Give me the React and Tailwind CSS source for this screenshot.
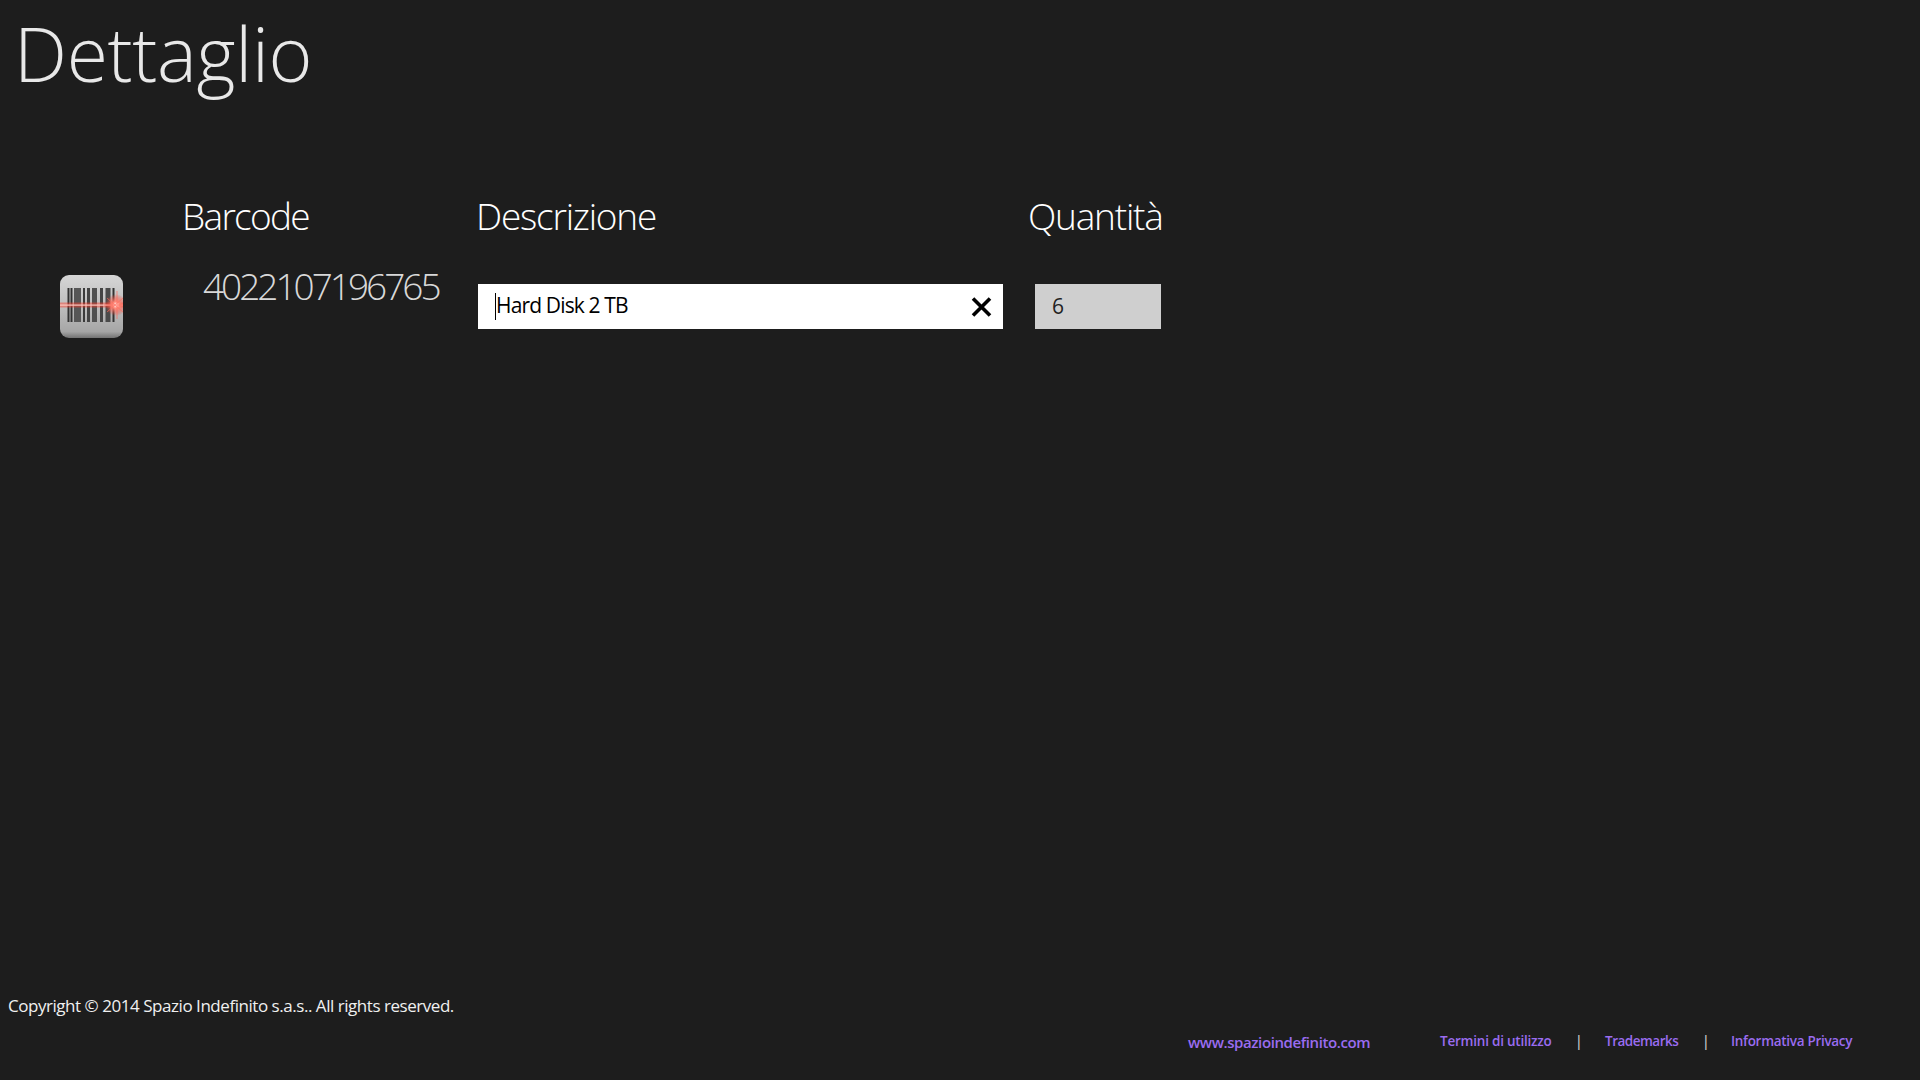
import React from 'react';

function BarcodeIcon() {
  const bars = [
    [7.5, 2, '#333'], [10.5, 2, '#333'], [14, 7, '#565656'], [23, 2, '#3a3a3a'], [27, 3, '#444'],
    [32, 5, '#505050'], [40, 3, '#444'], [45.5, 5, '#4a4a4a'], [52.5, 2, '#333'],
  ];
  return (
    <svg width="63" height="63" viewBox="0 0 63 63" className="shrink-0">
      <defs>
        <linearGradient id="tile" x1="0" y1="0" x2="0" y2="1">
          <stop offset="0" stopColor="#d6d6d6" />
          <stop offset="0.6" stopColor="#b8b8b8" />
          <stop offset="0.9" stopColor="#a6a6a6" />
          <stop offset="1" stopColor="#737373" />
        </linearGradient>
        <radialGradient id="flare">
          <stop offset="0" stopColor="#fff" />
          <stop offset="0.3" stopColor="#ff8a7a" />
          <stop offset="1" stopColor="#ff3b2b" stopOpacity="0" />
        </radialGradient>
      </defs>
      <rect width="63" height="63" rx="9" fill="url(#tile)" />
      {bars.map(([x, w, c]) => (
        <rect key={x} x={x} y="13" width={w} height="34" fill={c} />
      ))}
      <rect x="0" y="27.5" width="63" height="5" fill="#ff3b2b" opacity="0.45" />
      <rect x="0" y="29.5" width="63" height="1.2" fill="#ffc8bf" />
      <circle cx="56" cy="30" r="11" fill="url(#flare)" />
      <path d="M57 16v28M47 23l16 14M47 37l16-14M44 30h19" stroke="#ff6a5a" strokeWidth="0.8" opacity="0.8" />
    </svg>
  );
}

function ClearIcon() {
  return (
    <svg width="21" height="20" viewBox="0 0 21 20" className="shrink-0">
      <path d="M2 1.5 19 18.5M19 1.5 2 18.5" stroke="#000" strokeWidth="3.6" fill="none" />
    </svg>
  );
}

export default function App() {
  return (
    <div className="flex h-screen flex-col overflow-hidden bg-[#1d1d1d] font-['Open_Sans',sans-serif] text-white">
      <h1 className="pt-[6px] pl-[14px] text-[75px] leading-[94px] font-light tracking-[-0.3px] text-[#e8e8e8]">
        Dettaglio
      </h1>

      <div className="mt-[91px] flex pl-[60px]">
        <div className="mt-[84px] w-[123px] shrink-0 self-start">
          <BarcodeIcon />
        </div>
        <div className="w-[295px] shrink-0">
          <h2 className="-ml-[1px] text-[37px] leading-[50px] font-light tracking-[-1.7px]">Barcode</h2>
          <div className="mt-[20px] pl-[20px] text-[37px] leading-[50px] font-light tracking-[-3px] text-[#d8d8d8]">
            4022107196765
          </div>
        </div>
        <div className="w-[557px] shrink-0">
          <h2 className="-ml-[2px] text-[37px] leading-[50px] font-light tracking-[-1.2px]">Descrizione</h2>
          <div className="mt-[43px] flex h-[45px] w-[525px] items-center justify-between bg-white pr-[11px] pl-[17px] text-[21px] tracking-[-0.85px] text-black">
            <div className="flex items-center">
              <span className="h-[27px] w-px bg-black" />
              <span className="-mt-[1px]">Hard Disk 2 TB</span>
            </div>
            <ClearIcon />
          </div>
        </div>
        <div className="w-[130px] shrink-0">
          <h2 className="-ml-[7px] text-[37px] leading-[50px] font-light tracking-[-1.2px]">Quantità</h2>
          <div className="mt-[43px] flex h-[45px] w-[126px] items-center bg-[#cfcfcf] pl-[17px] text-[21px] text-[#222]">
            6
          </div>
        </div>
      </div>

      <div className="mt-auto pl-[8px] text-[17px] leading-[24px] tracking-[-0.46px] text-[#f0f0f0]">
        Copyright © 2014 Spazio Indefinito s.a.s.. All rights reserved.
      </div>
      <div className="mt-[14px] mb-[28px] flex items-center pl-[1188px] font-semibold text-[#9a6cf0]">
        <a className="w-[252px] text-[15px] leading-[20px] tracking-[-0.4px]">www.spazioindefinito.com</a>
        <a className="-mt-[3px] w-[135px] text-[13.5px] leading-[20px] tracking-[-0.22px]">Termini di utilizzo</a>
        <span className="-mt-[3px] w-[30px] text-[14px] leading-[20px] font-normal text-[#e0e0e0]">|</span>
        <a className="-mt-[3px] w-[97px] text-[13.5px] leading-[20px] tracking-[-0.5px]">Trademarks</a>
        <span className="-mt-[3px] w-[29px] text-[14px] leading-[20px] font-normal text-[#e0e0e0]">|</span>
        <a className="-mt-[3px] text-[13.5px] leading-[20px] tracking-[-0.3px]">Informativa Privacy</a>
      </div>
    </div>
  );
}
